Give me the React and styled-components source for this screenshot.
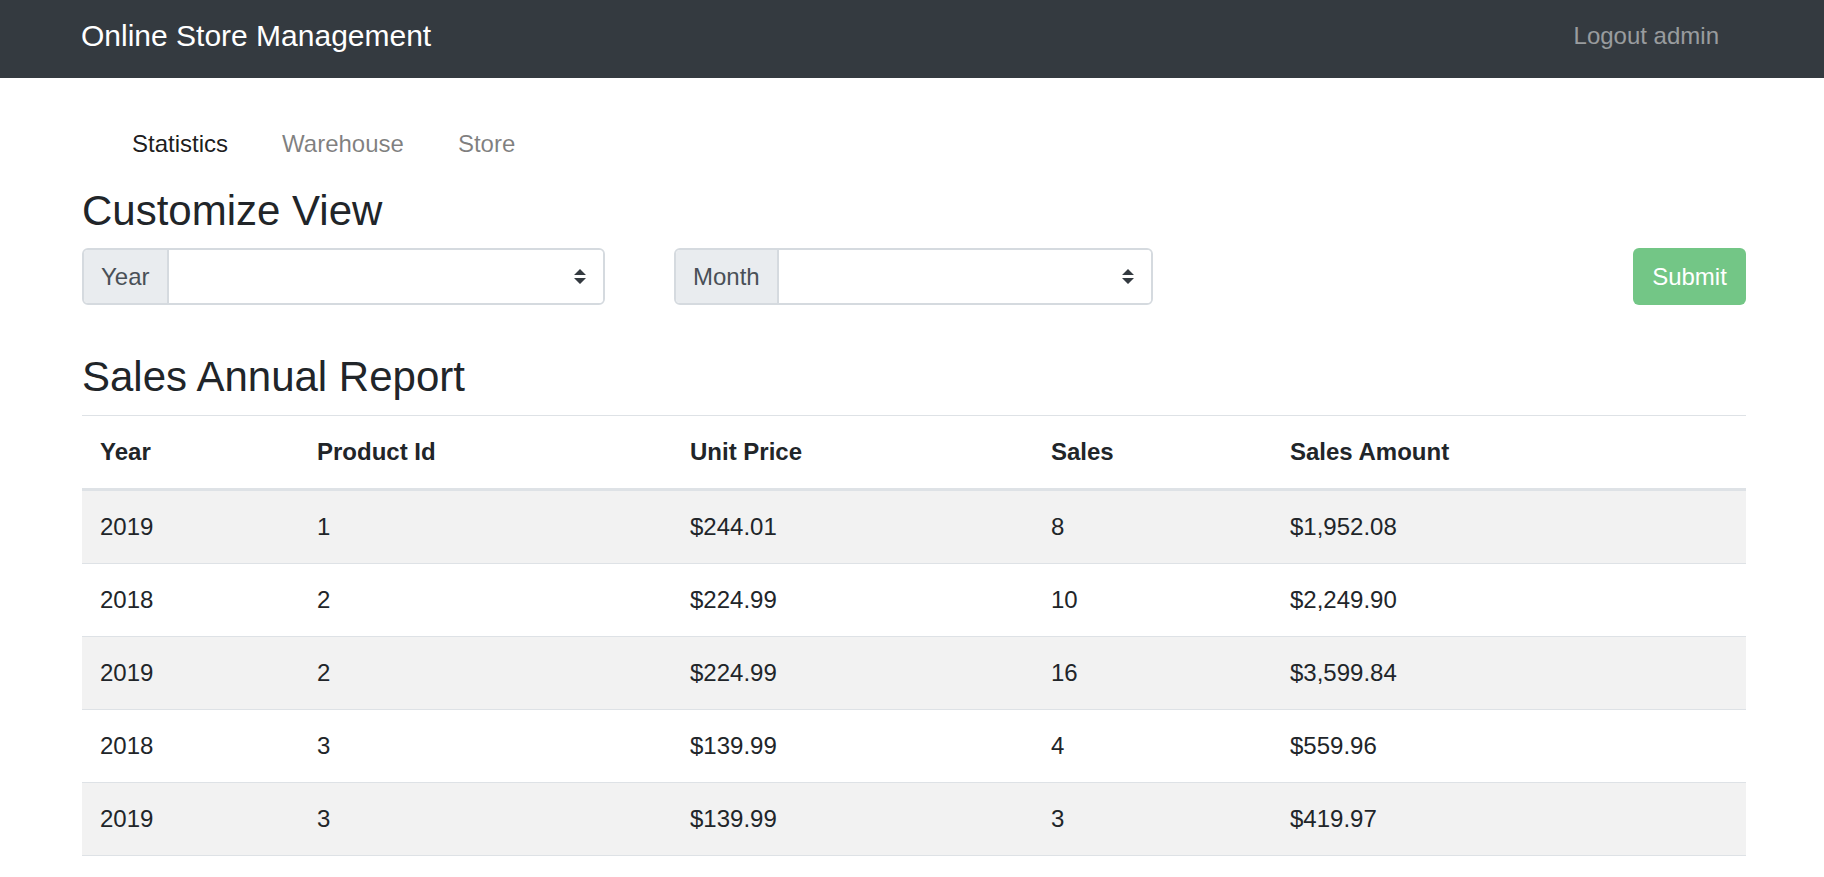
import React from "react";
import styled, { createGlobalStyle } from "styled-components";

const GlobalStyle = createGlobalStyle`
  body {
    margin: 0;
    font-family: "Liberation Sans", Arial, sans-serif;
    font-size: 24px;
    line-height: 1.5;
    color: #212529;
    background: #fff;
  }
  * {
    box-sizing: border-box;
  }
`;

const Container = styled.div`
  width: 1664px;
  margin-left: 82px;
`;

const TopBar = styled.nav`
  background-color: #343a40;
  height: 78px;
`;

const TopBarInner = styled(Container)`
  display: flex;
  justify-content: space-between;
  align-items: flex-start;
  padding-top: 13px;
`;

const Brand = styled.a`
  margin-left: -1px;
  font-size: 30px;
  line-height: 45px;
  color: #fff;
  text-decoration: none;
`;

const Logout = styled.a`
  margin-top: 5px;
  padding-right: 27px;
  font-size: 24px;
  line-height: 36px;
  color: rgba(255, 255, 255, 0.5);
  text-decoration: none;
`;

const Tabs = styled.ul`
  display: flex;
  list-style: none;
  margin: 36px 0 0;
  padding: 0 0 0 23px;
`;

const TabLink = styled.a`
  display: block;
  padding: 12px 27px;
  line-height: 36px;
  color: ${(p) => (p.$active ? "rgba(0, 0, 0, 0.9)" : "rgba(0, 0, 0, 0.5)")};
  text-decoration: none;
`;

const Heading = styled.h3`
  margin: ${(p) => p.$top}px 0 12px;
  font-size: 42px;
  font-weight: 500;
  line-height: 1.2;
`;

const FilterRow = styled.form`
  display: flex;
  align-items: center;
  height: 57px;
`;

const InputGroup = styled.div`
  display: flex;
  width: ${(p) => p.$width}px;
  height: 57px;
  margin-left: ${(p) => p.$offset || 0}px;
  border: 2px solid #d5dadf;
  border-radius: 6px;
  overflow: hidden;
`;

const Prepend = styled.span`
  display: flex;
  align-items: center;
  padding: 0 17px;
  background-color: #e9ecef;
  border-right: 2px solid #d5dadf;
  color: #495057;
`;

const SelectBox = styled.div`
  flex: 1;
  display: flex;
  align-items: center;
  justify-content: flex-end;
  padding-right: 17px;
  background: #fff;
`;

const SubmitButton = styled.button`
  margin-left: auto;
  width: 113px;
  height: 57px;
  border: none;
  border-radius: 6px;
  background-color: #73c686;
  color: #fff;
  font-family: inherit;
  font-size: 24px;
  line-height: 36px;
`;

const Table = styled.table`
  width: 100%;
  border-collapse: collapse;
`;

const Th = styled.th`
  width: ${(p) => (p.$width ? `${p.$width}px` : "auto")};
  padding: 18px;
  text-align: left;
  vertical-align: bottom;
  font-weight: 700;
  line-height: 36px;
  border-top: 1px solid #dee2e6;
  border-bottom: 3px solid #dee2e6;
`;

const Row = styled.tr`
  background-color: ${(p) => (p.$striped ? "#f2f2f2" : "#fff")};
`;

const Td = styled.td`
  padding: 18px;
  line-height: 36px;
  border-top: 1px solid #dee2e6;
  border-bottom: 1px solid #dee2e6;
`;

const SelectArrow = () => (
  <svg width="12" height="15" viewBox="0 0 4 5">
    <path d="M2 0L0 2h4zm0 5L0 3h4z" fill="#343a40" />
  </svg>
);

const columns = [
  { label: "Year", width: 217 },
  { label: "Product Id", width: 373 },
  { label: "Unit Price", width: 361 },
  { label: "Sales", width: 239 },
  { label: "Sales Amount" },
];

const rows = [
  ["2019", "1", "$244.01", "8", "$1,952.08"],
  ["2018", "2", "$224.99", "10", "$2,249.90"],
  ["2019", "2", "$224.99", "16", "$3,599.84"],
  ["2018", "3", "$139.99", "4", "$559.96"],
  ["2019", "3", "$139.99", "3", "$419.97"],
];

const App = () => {
  return (
    <>
      <GlobalStyle />
      <TopBar>
        <TopBarInner>
          <Brand href="#">Online Store Management</Brand>
          <Logout href="#">Logout admin</Logout>
        </TopBarInner>
      </TopBar>
      <Container>
        <Tabs>
          <li>
            <TabLink href="#" $active>
              Statistics
            </TabLink>
          </li>
          <li>
            <TabLink href="#">Warehouse</TabLink>
          </li>
          <li>
            <TabLink href="#">Store</TabLink>
          </li>
        </Tabs>
        <Heading $top={12}>Customize View</Heading>
        <FilterRow onSubmit={(e) => e.preventDefault()}>
          <InputGroup $width={523}>
            <Prepend>Year</Prepend>
            <SelectBox>
              <SelectArrow />
            </SelectBox>
          </InputGroup>
          <InputGroup $width={479} $offset={69}>
            <Prepend>Month</Prepend>
            <SelectBox>
              <SelectArrow />
            </SelectBox>
          </InputGroup>
          <SubmitButton type="submit" disabled>
            Submit
          </SubmitButton>
        </FilterRow>
        <Heading $top={47}>Sales Annual Report</Heading>
        <Table>
          <thead>
            <tr>
              {columns.map((col) => (
                <Th key={col.label} $width={col.width}>
                  {col.label}
                </Th>
              ))}
            </tr>
          </thead>
          <tbody>
            {rows.map((row, i) => (
              <Row key={i} $striped={i % 2 === 0}>
                {row.map((cell, j) => (
                  <Td key={j}>{cell}</Td>
                ))}
              </Row>
            ))}
          </tbody>
        </Table>
      </Container>
    </>
  );
};

export default App;
